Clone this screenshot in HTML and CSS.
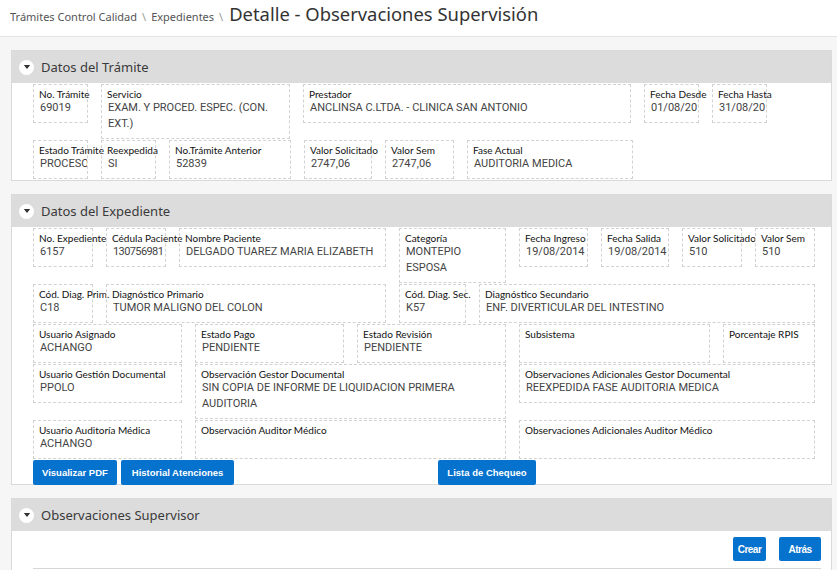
FILE: index.html
```html
<!DOCTYPE html>
<html lang="es">
<head>
<meta charset="utf-8">
<title>Detalle - Observaciones Supervisión</title>
<link rel="stylesheet" href="styles.css">
</head>
<body>
<header class="topbar">
  <nav class="crumbs"><span>Trámites Control Calidad</span><span class="sep">\</span><span>Expedientes</span><span class="sep">\</span></nav>
  <h1 class="title">Detalle - Observaciones Supervisión</h1>
</header>
<main class="content">
  <section class="panel">
    <div class="panel-head"><span class="toggle"><svg width="8" height="6" viewBox="0 0 8 6"><path d="M0.8 0.9h6.4L4 5z" fill="#333"/></svg></span><span class="panel-title">Datos del Trámite</span></div>
    <div class="panel-body">
      <div class="row">
        <div class="field w55"><div class="lbl">No. Trámite</div><div class="val">69019</div></div>
        <div class="field w189"><div class="lbl">Servicio</div><div class="val wrap">EXAM. Y PROCED. ESPEC. (CON. EXT.)</div></div>
        <div class="field w328"><div class="lbl">Prestador</div><div class="val">ANCLINSA C.LTDA. - CLINICA SAN ANTONIO</div></div>
        <div class="field w55"><div class="lbl">Fecha Desde</div><div class="val">01/08/2014</div></div>
        <div class="field w55"><div class="lbl">Fecha Hasta</div><div class="val">31/08/2014</div></div>
      </div>
      <div class="row">
        <div class="field w55"><div class="lbl">Estado Trámite</div><div class="val">PROCESO</div></div>
        <div class="field w55"><div class="lbl">Reexpedida</div><div class="val">SI</div></div>
        <div class="field w122"><div class="lbl">No.Trámite Anterior</div><div class="val">52839</div></div>
        <div class="field w68"><div class="lbl">Valor Solicitado</div><div class="val">2747,06</div></div>
        <div class="field w69"><div class="lbl">Valor Sem</div><div class="val">2747,06</div></div>
        <div class="field w166"><div class="lbl">Fase Actual</div><div class="val">AUDITORIA MEDICA</div></div>
      </div>
    </div>
  </section>

  <section class="panel">
    <div class="panel-head"><span class="toggle"><svg width="8" height="6" viewBox="0 0 8 6"><path d="M0.8 0.9h6.4L4 5z" fill="#333"/></svg></span><span class="panel-title">Datos del Expediente</span></div>
    <div class="panel-body">
      <div class="row">
        <div class="field w60"><div class="lbl">No. Expediente</div><div class="val">6157</div></div>
        <div class="field w60 tight"><div class="lbl">Cédula Paciente</div><div class="val">130756981</div></div>
        <div class="field w207"><div class="lbl">Nombre Paciente</div><div class="val">DELGADO TUAREZ MARIA ELIZABETH</div></div>
        <div class="field w107"><div class="lbl">Categoría</div><div class="val wrap">MONTEPIO ESPOSA</div></div>
        <div class="field w69"><div class="lbl">Fecha Ingreso</div><div class="val">19/08/2014</div></div>
        <div class="field w68"><div class="lbl">Fecha Salida</div><div class="val">19/08/2014</div></div>
        <div class="field w60"><div class="lbl">Valor Solicitado</div><div class="val">510</div></div>
        <div class="field w60"><div class="lbl">Valor Sem</div><div class="val">510</div></div>
      </div>
      <div class="row">
        <div class="field w60"><div class="lbl">Cód. Diag. Prim.</div><div class="val">C18</div></div>
        <div class="field w280"><div class="lbl">Diagnóstico Primario</div><div class="val">TUMOR MALIGNO DEL COLON</div></div>
        <div class="field w67"><div class="lbl">Cód. Diag. Sec.</div><div class="val">K57</div></div>
        <div class="field w336"><div class="lbl">Diagnóstico Secundario</div><div class="val">ENF. DIVERTICULAR DEL INTESTINO</div></div>
      </div>
      <div class="row">
        <div class="field w149"><div class="lbl">Usuario Asignado</div><div class="val">ACHANGO</div></div>
        <div class="field w149"><div class="lbl">Estado Pago</div><div class="val">PENDIENTE</div></div>
        <div class="field w149"><div class="lbl">Estado Revisión</div><div class="val">PENDIENTE</div></div>
        <div class="field w191"><div class="lbl">Subsistema</div><div class="val"></div></div>
        <div class="field w92"><div class="lbl">Porcentaje RPIS</div><div class="val"></div></div>
      </div>
      <div class="row">
        <div class="field w149"><div class="lbl">Usuario Gestión Documental</div><div class="val">PPOLO</div></div>
        <div class="field w311"><div class="lbl">Observación Gestor Documental</div><div class="val wrap">SIN COPIA DE INFORME DE LIQUIDACION PRIMERA AUDITORIA</div></div>
        <div class="field w296"><div class="lbl">Observaciones Adicionales Gestor Documental</div><div class="val">REEXPEDIDA FASE AUDITORIA MEDICA</div></div>
      </div>
      <div class="row">
        <div class="field w149"><div class="lbl">Usuario Auditoría Médica</div><div class="val">ACHANGO</div></div>
        <div class="field w311"><div class="lbl">Observación Auditor Médico</div><div class="val"></div></div>
        <div class="field w296"><div class="lbl">Observaciones Adicionales Auditor Médico</div><div class="val"></div></div>
      </div>
      <div class="actions">
        <button class="btn">Visualizar PDF</button>
        <button class="btn btn-wide">Historial Atenciones</button>
        <button class="btn btn-far">Lista de Chequeo</button>
      </div>
    </div>
  </section>

  <section class="panel">
    <div class="panel-head"><span class="toggle"><svg width="8" height="6" viewBox="0 0 8 6"><path d="M0.8 0.9h6.4L4 5z" fill="#333"/></svg></span><span class="panel-title">Observaciones Supervisor</span></div>
    <div class="panel-body sup">
      <div class="sup-actions">
        <button class="btn btn-sm btn-crear">Crear</button>
        <button class="btn btn-sm btn-atras">Atrás</button>
      </div>
      <div class="sup-table"></div>
    </div>
  </section>
</main>
</body>
</html>
```

FILE: styles.css
```css
* { box-sizing: border-box; }
html, body { margin: 0; padding: 0; }
body {
  background: #f6f6f6;
  font-family: "Lato", "Noto Sans", sans-serif;
  color: #333;
  height: 570px;
  overflow: hidden;
}
.topbar {
  background: #fff;
  height: 37px;
  border-bottom: 1px solid #e4e4e4;
  display: flex;
  align-items: baseline;
  padding: 0 0 0 10px;
}
.crumbs {
  font-family: "Noto Sans", sans-serif;
  font-size: 11px;
  color: #555;
  display: flex;
  gap: 5px;
  padding-top: 9px;
  line-height: 14px;
}
.crumbs .sep { color: #999; }
.title {
  font-family: "Noto Sans", sans-serif;
  margin: 0 0 0 6px;
  font-size: 18.4px;
  font-weight: 400;
  color: #333;
  line-height: 28px;
}
.content {
  padding: 13px 5px 0 11px;
}
.panel {
  background: #fff;
  border: 1px solid #dadada;
  margin-bottom: 13px;
}
.panel-head {
  background: #dcdcdc;
  height: 32px;
  display: flex;
  align-items: center;
  padding-left: 7px;
}
.toggle {
  width: 15px;
  height: 15px;
  border-radius: 50%;
  background: #fff;
  display: flex;
  align-items: center;
  justify-content: center;
  margin-right: 7px;
}
.toggle svg { display: block; }
.panel-title {
  font-family: "Noto Sans", sans-serif;
  font-size: 13px;
  color: #3a3a3a;
}
.panel-body {
  padding: 1px 0 0 21px;
}
.row {
  display: flex;
  align-items: flex-start;
  gap: 13px;
  margin-bottom: 1px;
}
.field {
  border: 1px dashed #d2d2d2;
  padding: 3px 5px 6px;
  flex: none;
}
.lbl {
  font-size: 10px;
  line-height: 12px;
  color: #111;
  white-space: nowrap;
}
.val {
  font-family: "Roboto", "Noto Sans", sans-serif;
  font-size: 11px;
  line-height: 16px;
  height: 16px;
  color: #444;
  white-space: nowrap;
  overflow: hidden;
  padding-left: 1px;
  margin-right: -5px;
}
.val.wrap { white-space: normal; height: auto; margin-right: 0; }
.tight .val { letter-spacing: -0.6px; }
.w55 { width: 55px; }
.w60 { width: 60px; }
.w67 { width: 67px; }
.w68 { width: 68px; }
.w69 { width: 69px; }
.w92 { width: 92px; }
.w107 { width: 107px; }
.w122 { width: 122px; }
.w149 { width: 149px; }
.w166 { width: 166px; }
.w189 { width: 189px; }
.w191 { width: 191px; }
.w207 { width: 207px; }
.w280 { width: 280px; }
.w296 { width: 296px; }
.w311 { width: 311px; }
.w328 { width: 328px; }
.w336 { width: 336px; }
.actions {
  display: flex;
  gap: 4px;
  margin-top: 0;
  margin-bottom: -1px;
}
.btn {
  background: #0572ce;
  color: #fff;
  border: none;
  border-radius: 2px;
  font-family: "Liberation Sans", sans-serif;
  font-weight: 700;
  font-size: 9.5px;
  height: 25px;
  padding: 0 9px;
  cursor: pointer;
}
.btn-wide { padding: 0 11px; }
.btn-far { margin-left: 200px; }
.sup { padding: 6px 10px 0 21px; }
.sup-actions {
  display: flex;
  justify-content: flex-end;
  gap: 13px;
}
.btn-sm {
  height: 24px;
  padding: 0;
  font-size: 10px;
  letter-spacing: -0.5px;
}
.btn-crear { width: 33px; }
.btn-atras { width: 42px; }
.sup-table {
  margin-top: 7px;
  border-top: 1px solid #d6d6d6;
  height: 40px;
}
```
